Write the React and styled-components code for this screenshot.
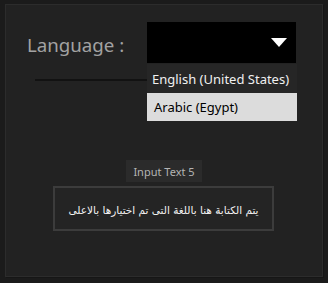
import React from "react";
import styled, { createGlobalStyle } from "styled-components";

const Global = createGlobalStyle`
  html, body { margin: 0; padding: 0; background: #1b1b1b; }
  body { width: 328px; height: 283px; overflow: hidden; font-family: "Noto Sans", "Open Sans", sans-serif; }
`;

const Page = styled.div`
  padding: 4px 0 0 5px;
`;

const Panel = styled.div`
  box-sizing: border-box;
  width: 318px;
  height: 273px;
  background: #222222;
  border: 1px solid #2c2c2c;
  box-shadow: 1px 1px 0 #161616;
  padding: 17px 0 0 21px;
  display: flex;
  flex-direction: column;
`;

const Row = styled.div`
  display: flex;
  align-items: center;
`;

const Label = styled.div`
  width: 120px;
  font-family: "Noto Sans", sans-serif;
  font-size: 18.7px;
  color: #a2a2a2;
  margin-top: 3px;
`;

const SelectWrap = styled.div`
  position: relative;
`;

const Select = styled.div`
  width: 149px;
  height: 41px;
  background: #000;
  display: flex;
  align-items: center;
  justify-content: flex-end;
  padding-right: 9px;
  box-sizing: border-box;
`;

const Menu = styled.div`
  position: absolute;
  top: 42px;
  left: 0;
  width: 150px;
  display: flex;
  flex-direction: column;
  z-index: 2;
`;

const Item = styled.div`
  height: ${(p) => p.$h}px;
  display: flex;
  align-items: center;
  padding-left: ${(p) => p.$pl}px;
  font-family: "Noto Sans", sans-serif;
  font-size: 13px;
  background: ${(p) => (p.$selected ? "#dcdcdc" : "#262626")};
  color: ${(p) => (p.$selected ? "#000" : "#f0f0f0")};
`;

const Underline = styled.div`
  margin: 16px 0 0 8px;
  width: 112px;
  height: 2px;
  background: #121212;
`;

const Field = styled.div`
  margin-top: 79px;
  display: flex;
  flex-direction: column;
  align-items: flex-start;
`;

const Caption = styled.div`
  margin-left: 99px;
  width: 76px;
  height: 22px;
  background: #2b2b2b;
  color: #b4b4b4;
  font-family: "Noto Sans", sans-serif;
  font-size: 11px;
  display: flex;
  align-items: center;
  justify-content: center;
`;

const TextBox = styled.div`
  margin: 4px 0 0 26px;
  box-sizing: border-box;
  width: 221px;
  height: 45px;
  border: 2px solid #3c3c3c;
  background: #242424;
  display: flex;
  align-items: center;
  justify-content: center;
  direction: rtl;
  color: #f2f2f2;
  font-family: "DejaVu Sans", sans-serif;
  font-size: 10.5px;
  padding-top: 2px;
`;

export default function App() {
  return (
    <Page>
      <Global />
      <Panel>
        <Row>
          <Label>Language :</Label>
          <SelectWrap>
            <Select>
              <svg width="16" height="9" viewBox="0 0 16 9">
                <polygon points="0,0 16,0 8,9" fill="#ffffff" />
              </svg>
            </Select>
            <Menu>
              <Item $h={29} $pl={5}>English (United States)</Item>
              <Item $h={28} $pl={7} $selected>Arabic (Egypt)</Item>
            </Menu>
          </SelectWrap>
        </Row>
        <Underline />
        <Field>
          <Caption>Input Text 5</Caption>
          <TextBox>يتم الكتابة هنا باللغة التى تم اختيارها بالاعلى</TextBox>
        </Field>
      </Panel>
    </Page>
  );
}
